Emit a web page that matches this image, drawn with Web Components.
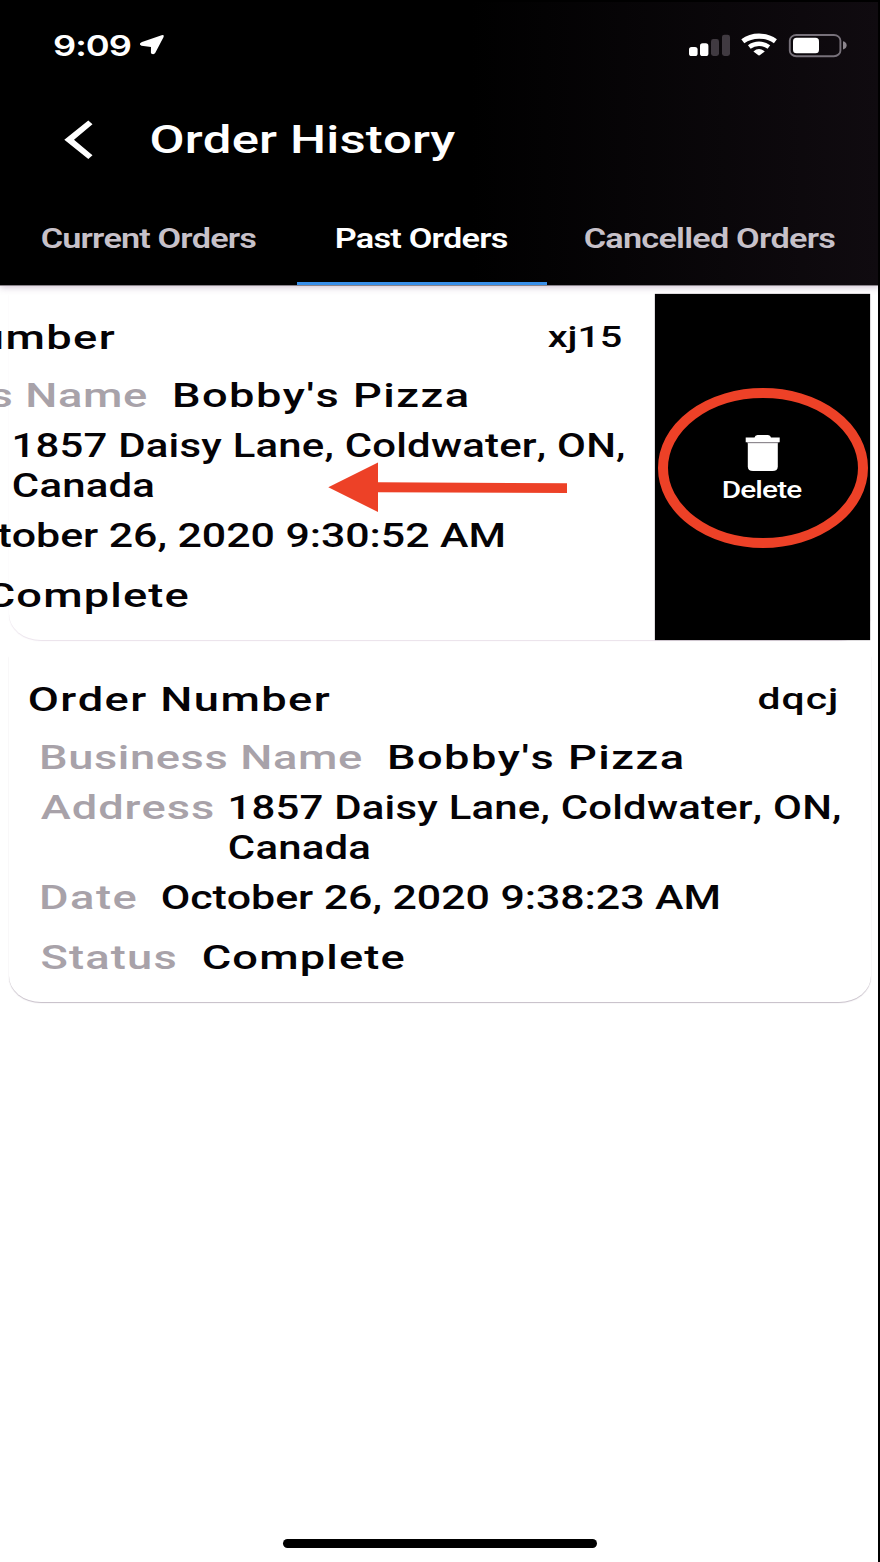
<!DOCTYPE html>
<html lang="en">
<head>
<meta charset="utf-8">
<title>Order History</title>
<style>
html,body{margin:0;padding:0;background:#fff}
body{width:880px;height:1562px;overflow:hidden;font-family:Roboto,"Liberation Sans",sans-serif}
</style>
</head>
<body>
<order-app></order-app>
<script>
const define = (name, html) => customElements.define(name, class extends HTMLElement {
  constructor() {
    super();
    this.attachShadow({mode: 'open'}).innerHTML = html;
  }
});

/* A single line of horizontally stretched type, tracked so its ink fills the width "w". */
const ctx = document.createElement('canvas').getContext('2d');
customElements.define('wide-text', class extends HTMLElement {
  constructor() {
    super();
    this.attachShadow({mode: 'open'}).innerHTML = `<style>
      :host{display:block;flex:none;line-height:40px;height:40px}
      span{display:block;width:max-content;white-space:nowrap;transform-origin:0 0;line-height:inherit}
    </style><span><slot></slot></span>`;
  }
  connectedCallback() {
    const text = this.textContent, w = +this.getAttribute('w');
    const size = this.getAttribute('size') || 33, weight = this.getAttribute('weight') || 550;
    const family = this.getAttribute('family') || 'Roboto';
    const stretch = +(this.getAttribute('stretch') || 1.37);
    ctx.font = `${weight} ${size * 10}px ${family}`;
    ctx.fontKerning = 'none';
    const m = ctx.measureText(text);
    const left = m.actualBoundingBoxLeft / 10;
    const ink = m.actualBoundingBoxRight / 10 + left;
    const span = this.shadowRoot.querySelector('span');
    this.style.width = w + 'px';
    span.style.font = `${weight} ${size}px ${family}, sans-serif`;
    span.style.fontKerning = 'none';
    span.style.lineHeight = 'inherit';
    span.style.letterSpacing = ((w - 1.5) / stretch - ink) / (text.length - 1) + 'px';
    span.style.transform = `translateX(${left * stretch + .8}px) scaleX(${stretch})`;
  }
});

define('status-bar', `<style>
  :host{display:flex;box-sizing:border-box;height:90px;padding:25px 33px 0 54.5px;justify-content:space-between;color:#fff}
  .l{display:flex} svg{display:block}
</style>
<div class="l"><wide-text w="77" size="29" weight="600" family="Inter" stretch="1.25" style="margin:.7px .3px 0 -.8px">9:09</wide-text>
<svg width="40" height="40" viewBox="131 25 40 40"><path d="M161.6 35.2Q164.6 34.4 163.6 37L155.2 53.1Q154.3 54.6 152.2 54.1Q150.8 53.8 150.9 52.6L151 47L141.5 45.8Q139.3 45 140 43.6Q140.6 42.6 142 42.1Z" fill="#fff"/></svg></div>
<svg width="160" height="40" viewBox="687 25 160 40">
<g fill="#fff"><rect x="689" y="47" width="8.6" height="9" rx="2.6"/><rect x="700" y="43.3" width="8.4" height="12.7" rx="2.6"/></g>
<g fill="#403a41"><rect x="711" y="39" width="8" height="17" rx="2.4"/><rect x="722" y="34.7" width="8" height="21.3" rx="2.4"/></g>
<g fill="none" stroke="#fff"><path d="M742.8 41.2C752 34.4 766 34.4 775.4 41.2" stroke-width="5.1"/><path d="M749.3 47C755 42.7 763 42.7 768.9 47" stroke-width="4.4"/></g>
<path d="M753.4 51.4Q759 46.6 764.8 51.4L760.4 54.8Q759 56.2 757.7 54.8Z" fill="#fff"/>
<rect x="789.8" y="35" width="50.6" height="21.2" rx="6.5" ry="5.5" fill="none" stroke="#77717a" stroke-width="1.9"/>
<rect x="793" y="37.8" width="26" height="15.4" rx="3.5" fill="#fff"/><path d="M843 41.2Q846.6 42 846.6 45.3Q846.6 48.6 843 49.5Z" fill="#8c868d"/></svg>`);

define('nav-bar', `<style>
  :host{display:flex;box-sizing:border-box;height:104px;padding:30px 0 0 60px;color:#fff}
  svg{display:block;margin:-2px 50.7px 0 0}
</style>
<svg width="40" height="44" viewBox="60 118 40 44"><path d="M88.3 120.4L92.5 124.2L74 139.7L92.5 155.2L88.3 159L64.3 139.7Z" fill="#fff"/></svg>
<wide-text w="304.5" size="38" stretch="1.34" weight="500">Order History</wide-text>`);

define('tab-bar', `<style>
  :host{display:grid;grid-template-columns:297px 250px 1fr;height:91px;color:#c7c1c9}
  div{display:flex;box-sizing:border-box;justify-content:center;padding-top:24.5px}
  .a{color:#fff;border-bottom:3.5px solid #3990ea}
</style>
<div><wide-text w="215.5" size="27" weight="600" stretch="1.27">Current Orders</wide-text></div>
<div class="a"><wide-text w="172" size="27" weight="600" stretch="1.27">Past Orders</wide-text></div>
<div style="padding-right:7.6px"><wide-text w="251.5" size="27" weight="600" stretch="1.27">Cancelled Orders</wide-text></div>`);

define('order-field', `<style>
  :host{display:flex;height:50px;padding-left:32.2px;color:#050306}
  ::slotted([slot=label]){color:#a8a2a9}
</style><slot name="label"></slot><slot></slot>`);

define('order-card', `<style>
  :host{display:flex;box-sizing:border-box;width:862px;height:346px;margin-left:9px;border-radius:0 0 32px 32px/0 0 26px 26px;box-shadow:0 1px 1px rgba(110,90,115,.4)}
  :host([swiped]){box-shadow:0 1px 1px rgba(150,110,155,.2)}
  .c{flex:none;box-sizing:border-box;width:861.5px;padding-top:24.2px}
  :host([swiped]) .c{margin-left:-215.5px}
  .h{display:flex;justify-content:space-between;height:58.2px;padding:0 33.5px 0 20px;color:#050306}
</style>
<div class="c"><div class="h"><slot name="title"></slot><slot name="code"></slot></div><slot></slot></div>
<slot name="action"></slot>`);

define('delete-action', `<style>
  :host{display:flex;flex:none;flex-direction:column;align-items:center;box-sizing:border-box;width:215px;height:346px;padding-top:139.5px;background:#000;color:#fff;box-shadow:0 0 1px #403844}
  svg{display:block;margin-bottom:1.6px}
</style>
<svg width="36" height="40" viewBox="745 433 36 40"><path d="M754.5 437.6Q755 435 757.5 435H768Q770.5 435 771 437.6H779.7V442.3H745.7V437.6Z" fill="#fff"/><path d="M747.8 442.5H777.8V466.5Q777.8 471 772.5 471H753Q747.8 471 747.8 466.5Z" fill="#fff"/><path d="M747 442.7H778.5" stroke="#8c868d"/></svg>
<wide-text w="79" size="24" weight="500" stretch="1.24" style="height:30px;line-height:30px">Delete</wide-text>`);

const fields = (date) => `
  <order-field><wide-text slot="label" w="321">Business Name</wide-text><wide-text w="294" style="margin-left:27px">Bobby's Pizza</wide-text></order-field>
  <order-field style="height:90px"><wide-text slot="label" w="173.5" style="margin-left:-1px">Address</wide-text><div style="margin-left:16px"><wide-text w="610" stretch="1.27">1857 Daisy Lane, Coldwater, ON,</wide-text><wide-text w="141" stretch="1.27" style="margin-left:-1.2px">Canada</wide-text></div></order-field>
  <order-field style="height:60px"><wide-text slot="label" w="95.5">Date</wide-text><wide-text w="557" stretch="1.3" style="margin-left:25.7px">${date}</wide-text></order-field>
  <order-field><wide-text slot="label" w="135">Status</wide-text><wide-text w="201.5" style="margin-left:26.8px">Complete</wide-text></order-field>`;

define('order-app', `<style>
  :host{display:block;position:relative;width:880px;height:1562px;overflow:hidden;background:#fff}
  header{height:285px;background:linear-gradient(90deg,#000 470px,#100b10 878px);border-bottom:1px solid #8a848b;box-shadow:0 1px 7px rgba(110,70,120,.35)}
  main{display:flex;flex-direction:column;gap:16px;padding-top:7.5px}
  .mark{position:absolute;left:0;top:0}
  .home{position:absolute;left:282.5px;top:1538.5px;width:314.5px;height:9.5px;border-radius:5px;background:#000}
  .edge{position:absolute;inset:0 0 0 auto;width:2px;background:#000}
  .top{position:absolute;inset:0 0 auto 0;height:2px;background:#000}
</style>
<header><status-bar></status-bar><nav-bar></nav-bar><tab-bar></tab-bar></header>
<main>
<order-card swiped><wide-text slot="title" w="301">Order Number</wide-text><wide-text slot="code" w="74.5" size="30" stretch="1.32" style="margin-top:-1px">xj15</wide-text>${fields('October 26, 2020 9:30:52 AM')}<delete-action slot="action"></delete-action></order-card>
<order-card><wide-text slot="title" w="301">Order Number</wide-text><wide-text slot="code" w="79" size="30" stretch="1.36" style="margin-top:-1px">dqcj</wide-text>${fields('October 26, 2020 9:38:23 AM')}</order-card>
</main>
<svg class="mark" width="880" height="700"><path d="M328.3 487.3L378 462.5V482.3L567 483.2V493L378 492.2V512Z" fill="#ed4127"/><ellipse cx="763" cy="468" rx="100" ry="75" fill="none" stroke="#ed4127" stroke-width="10"/></svg>
<div class="home"></div><div class="edge"></div><div class="top"></div>`);
</script>
</body>
</html>
